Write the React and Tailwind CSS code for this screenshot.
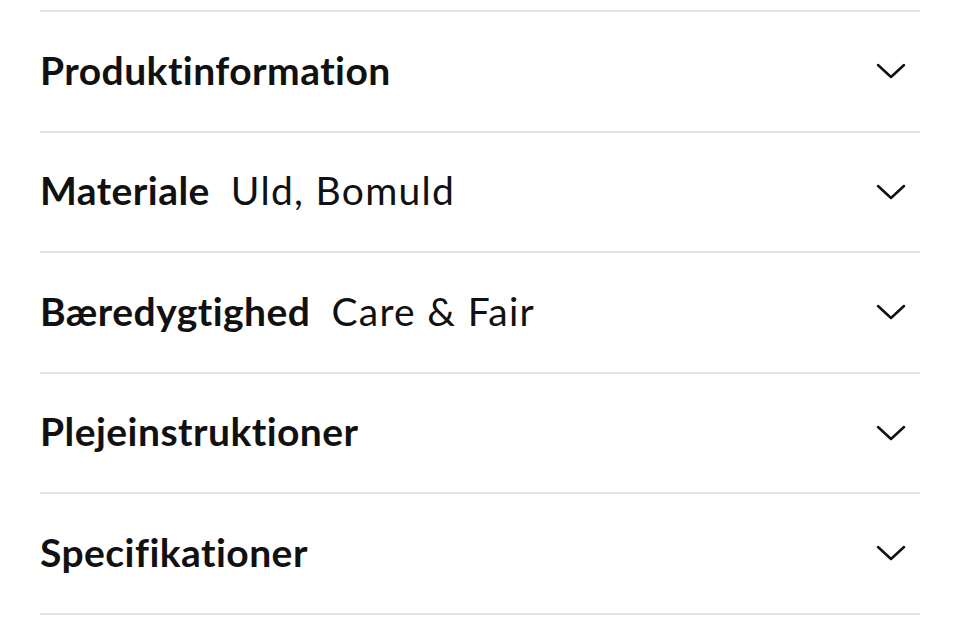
export default function App() {
  const rows = [
    { title: "Produktinformation" },
    { title: "Materiale", value: "Uld, Bomuld" },
    { title: "Bæredygtighed", value: "Care & Fair" },
    { title: "Plejeinstruktioner" },
    { title: "Specifikationer" },
  ];

  return (
    <div className="w-[960px] h-[630px] bg-white px-10 pt-[10px] font-['Lato',sans-serif] text-[#111] [font-variant-ligatures:none]">
      <div className="border-t-2 border-[#e3e3e3]">
        {rows.map((row) => (
          <div
            key={row.title}
            className="flex items-center justify-between h-[120.5px] border-b-2 border-[#e3e3e3]"
          >
            <div className="flex items-baseline gap-[21px] text-[39px] leading-none pb-[2px]">
              <span className="font-bold tracking-[0.45px]">{row.title}</span>
              {row.value && (
                <span className="font-normal tracking-[1.3px]">{row.value}</span>
              )}
            </div>
            <svg
              width="30"
              height="16"
              viewBox="0 0 30 16"
              fill="none"
              stroke="#111"
              strokeWidth="2.5"
              strokeLinecap="round"
              strokeLinejoin="round"
              className="mr-[14px]"
            >
              <path d="M2 2 L15 14 L28 2" />
            </svg>
          </div>
        ))}
      </div>
    </div>
  );
}
